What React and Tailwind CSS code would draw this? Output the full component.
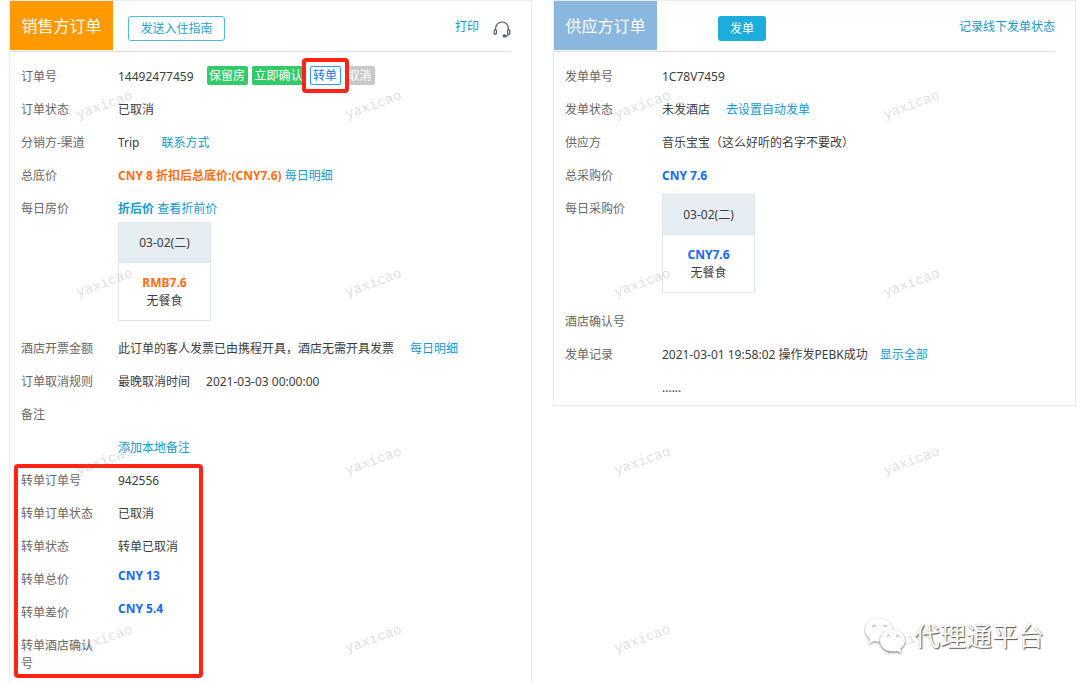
import clsx from 'clsx';

const WATERMARKS = Array.from({ length: 16 }, (_, i) => i);

function Link({ children, className }) {
  return (
    <a href="#" className={clsx('text-[#1499cc] hover:underline', className)}>
      {children}
    </a>
  );
}

function Row({ label, children, valueClass = 'pt-2' }) {
  return (
    <div className="flex min-h-[33px] pl-[11px]">
      <dt className="w-[97px] shrink-0 pt-2 pr-5 pb-[7px] text-[#666]">{label}</dt>
      <dd className={clsx('min-w-0 flex-1', valueClass)}>{children}</dd>
    </div>
  );
}

function PriceCard({ date, price, meal, priceClass }) {
  return (
    <div className="w-[93px] border border-[#dfe7ee] text-center">
      <div className="h-10 border-b border-[#dfe7ee] bg-[#e6edf3] leading-10">{date}</div>
      <div className="pt-[11px] pb-2.5">
        <p className={clsx('font-bold', priceClass)}>{price}</p>
        <p>{meal}</p>
      </div>
    </div>
  );
}

function PanelHeader({ title, titleClass, children }) {
  return (
    <header className="mr-5 flex h-[51px] items-start border-b border-[#dcdfe2]">
      <h2 className={clsx('h-[49px] w-[103px] text-center text-base leading-[50px] text-white', titleClass)}>
        {title}
      </h2>
      {children}
    </header>
  );
}

function HeadsetIcon() {
  return (
    <svg className="mt-5 h-[17px] w-[18px]" viewBox="0 0 18 17" fill="none" stroke="#4d5f6b" strokeWidth="1.2">
      <path d="M2.600 9V7.400a6.400 6.400 0 0 1 12.800 0V9" />
      <ellipse cx="2.300" cy="11" rx="1.200" ry="2.300" />
      <ellipse cx="15.700" cy="11" rx="1.200" ry="2.300" />
      <path d="M15.400 13.400c-.3 1-.9 1.500-2 1.700" />
      <ellipse cx="11.600" cy="14.900" rx="1.500" ry="1" fill="#4d5f6b" />
    </svg>
  );
}

function SalesPanel() {
  const tag = 'h-[19px] rounded-xs text-center leading-[19px] whitespace-nowrap text-white';

  return (
    <section className="min-h-screen border border-b-0 border-[#e8edf4]">
      <PanelHeader title="销售方订单" titleClass="bg-[#ff9900]">
        <button className="mt-[15px] ml-[15px] h-[25px] w-[97px] rounded-[3px] border border-[#4dbde2] text-[#1ca4d4]">
          发送入住指南
        </button>
        <Link className="mt-[17px] mr-3.5 ml-auto">打印</Link>
        <HeadsetIcon />
      </PanelHeader>

      <dl className="pt-2">
        <Row label="订单号">
          <div className="flex items-start gap-[13px]">
            <span>14492477459</span>
            <div className="-mt-0.5 flex gap-1">
              <button className={clsx(tag, 'w-[41px] bg-[#32cb69]')}>保留房</button>
              <button className={clsx(tag, 'w-[54px] bg-[#32cb69]')}>立即确认</button>
              <div className="relative">
                <button className="block h-[19px] w-[31px] rounded-xs border border-[#3d90ff] leading-[17px] text-[#1677ff]">
                  转单
                </button>
                <span className="pointer-events-none absolute -inset-2 rounded-sm border-4 border-[#ff2416]" />
              </div>
              <button className={clsx(tag, 'w-[30px] bg-[#c9c9c9]')}>取消</button>
            </div>
          </div>
        </Row>
        <Row label="订单状态">已取消</Row>
        <Row label="分销方-渠道">
          Trip<Link className="ml-[22px]">联系方式</Link>
        </Row>
        <Row label="总底价">
          <b className="text-[#ff6f0f]">CNY 8 折扣后总底价:(CNY7.6)</b> <Link>每日明细</Link>
        </Row>
        <Row label="每日房价">
          <Link className="font-bold">折后价</Link> <Link>查看折前价</Link>
          <div className="mt-1 mb-[11px]">
            <PriceCard date="03-02(二)" price="RMB7.6" meal="无餐食" priceClass="text-[#ff6f0f]" />
          </div>
        </Row>
        <Row label="酒店开票金额">
          此订单的客人发票已由携程开具，酒店无需开具发票<Link className="ml-4">每日明细</Link>
        </Row>
        <Row label="订单取消规则">
          最晚取消时间<span className="ml-4">2021-03-03 00:00:00</span>
        </Row>
        <Row label="备注" />
        <Row>
          <Link>添加本地备注</Link>
        </Row>
      </dl>

      {/* Transferred order, outlined */}
      <div className="relative">
        <dl>
          <Row label="转单订单号">942556</Row>
          <Row label="转单订单状态">已取消</Row>
          <Row label="转单状态">转单已取消</Row>
          <Row label="转单总价" valueClass="pt-1">
            <b className="text-[#1268ff]">CNY 13</b>
          </Row>
          <Row label="转单差价" valueClass="pt-1">
            <b className="text-[#1268ff]">CNY 5.4</b>
          </Row>
          <Row label="转单酒店确认号" />
        </dl>
        <span className="pointer-events-none absolute top-0 bottom-0.5 left-1 w-[189px] rounded-sm border-4 border-[#ff2416]" />
      </div>
    </section>
  );
}

function SupplierPanel() {
  return (
    <section className="border border-[#e4edf5]">
      <PanelHeader title="供应方订单" titleClass="bg-[#8ab7de]">
        <button className="mt-[15px] ml-[61px] h-[25px] w-12 rounded-[3px] bg-[#1baedc] text-white">发单</button>
        <Link className="mt-[17px] ml-auto">记录线下发单状态</Link>
      </PanelHeader>

      <dl className="pt-2 pb-px">
        <Row label="发单单号">1C78V7459</Row>
        <Row label="发单状态">
          未发酒店<Link className="ml-4">去设置自动发单</Link>
        </Row>
        <Row label="供应方">音乐宝宝（这么好听的名字不要改）</Row>
        <Row label="总采购价">
          <b className="text-[#1268ff]">CNY 7.6</b>
        </Row>
        <Row label="每日采购价" valueClass="pt-0.5 pb-3">
          <PriceCard date="03-02(二)" price="CNY7.6" meal="无餐食" priceClass="text-[#1268ff]" />
        </Row>
        <Row label="酒店确认号" />
        <Row label="发单记录">
          2021-03-01 19:58:02 操作发PEBK成功<Link className="ml-3">显示全部</Link>
        </Row>
        <Row>......</Row>
      </dl>
    </section>
  );
}

function Watermarks() {
  return (
    <div className="pointer-events-none absolute inset-0 overflow-hidden" aria-hidden="true">
      <div className="mt-4 -ml-[30px] grid auto-rows-[178px] grid-cols-[repeat(4,269px)] place-items-center">
        {WATERMARKS.map((i) => (
          <span key={i} className="-rotate-20 font-['Liberation_Mono',monospace] text-sm text-[#777]/25">
            yaxicao
          </span>
        ))}
      </div>
    </div>
  );
}

function Brand() {
  return (
    <div className="absolute right-9 bottom-7 flex items-center gap-2">
      <svg className="h-[38px] w-[42px]" viewBox="0 0 42 38" fill="#fff">
        <g className="drop-shadow-[0_1px_1px_#888]">
          <path d="M14.500 1C6.900 1 1 6 1 12.600c0 3.700 1.900 6.900 5 9.100L4.700 27l5.400-2.900c1.400.4 2.900.6 4.400.6 7.600 0 13.700-5.300 13.700-12S22.100 1 14.500 1z" />
        </g>
        <g className="drop-shadow-[0_1px_1px_#666]">
          <path d="M28.500 12.500c-7.200 0-12.500 4.800-12.500 11s5.300 11 12.500 11c1.500 0 2.900-.2 4.200-.6L37.500 36l-1.200-4.200c2.800-2 4.700-5 4.700-8.300 0-6.200-5.300-11-12.500-11z" />
        </g>
        <path
          d="M8 9.500q1.800-2.600 3.600 0M19.500 9.500q1.800-2.600 3.600 0M23 19.500q1.600-2.200 3.200 0M32 19.500q1.600-2.200 3.200 0"
          fill="none"
          stroke="#999"
        />
      </svg>
      <span className="text-[26px] leading-9 text-white [text-shadow:1px_1px_1px_#555,0_0_1px_#aaa]">
        代理通平台
      </span>
    </div>
  );
}

export default function App() {
  return (
    <main className="relative min-h-screen bg-white font-['Noto_Sans','Noto_Sans_CJK_SC',sans-serif] text-xs leading-[18px] text-[#3c3c3c]">
      <div className="grid grid-cols-2 items-start gap-[21px] pr-1 pl-[9px]">
        <SalesPanel />
        <SupplierPanel />
      </div>
      <Watermarks />
      <Brand />
    </main>
  );
}
